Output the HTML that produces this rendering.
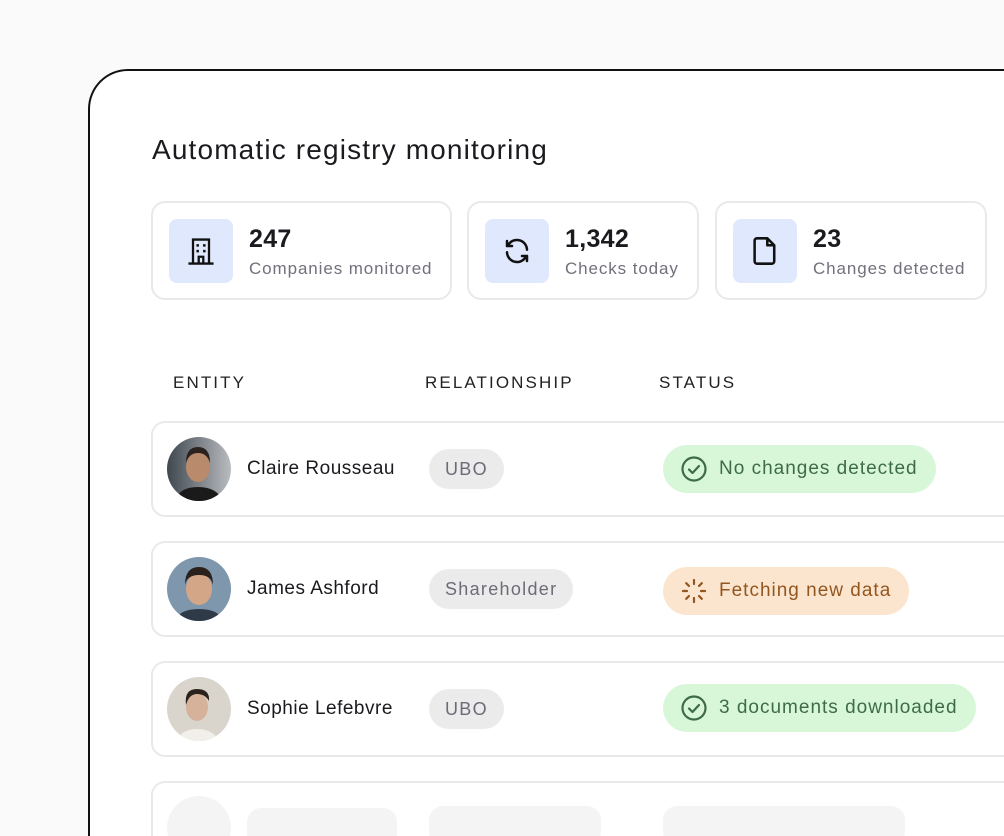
<!DOCTYPE html>
<html><head><meta charset="utf-8">
<style>
*{box-sizing:border-box;margin:0;padding:0}
html,body{width:1004px;height:836px;overflow:hidden}
body{background:#fafafa;font-family:"Liberation Sans",sans-serif;color:#1b1b1f}
#wrap{position:relative;width:1004px;height:836px;overflow:hidden}
.abs{position:absolute}
.panel{left:88px;top:69px;width:916px;height:767px;border:2px solid #111;border-right:0;border-bottom:0;border-radius:40px 0 0 0;background:#fff}
.title{left:152px;top:134px;font-size:28px;color:#1b1b1f;letter-spacing:1.15px}
.stat{top:201px;height:99px;border:2px solid #e9e9e9;border-radius:14px;background:#fff}
.ib{position:absolute;left:16px;top:16px;width:64px;height:64px;background:#dfe8fd;border-radius:8px;display:flex;align-items:center;justify-content:center}
.num{position:absolute;left:96px;top:22px;font-size:25px;font-weight:bold;color:#1b1b1f;letter-spacing:0.3px}
.lbl{position:absolute;left:96px;top:56px;font-size:17px;color:#70717b;white-space:nowrap;letter-spacing:0.9px}
.hd{top:373px;font-size:17px;letter-spacing:2.1px;color:#222}
.row{left:151px;width:853px;height:96px;border:2px solid #e9e9e9;border-right:0;border-radius:14px 0 0 14px;background:#fff}
.av{position:absolute;left:14px;top:14px;width:64px;height:64px;border-radius:50%;overflow:hidden}
.name{position:absolute;left:94px;top:35px;font-size:19px;color:#1b1b1f;white-space:nowrap;letter-spacing:0.5px}
.rel{position:absolute;left:276px;top:26px;height:40px;border-radius:20px;background:#ebebeb;color:#6b6c76;font-size:18px;line-height:40px;padding:0 16px;letter-spacing:1.3px}
.st{position:absolute;left:510px;top:22px;height:48px;border-radius:24px;font-size:19px;line-height:48px;padding:0 18px 0 56px;white-space:nowrap;letter-spacing:1px}
.st svg{position:absolute;left:18px;top:11px}
.g{background:#d8f7d9;color:#3e6b47}
.o{background:#fbe5cf;color:#93561f}
.sk{background:#f4f4f4;position:absolute}
</style></head><body><div id="wrap">
<div class="abs panel"></div>
<div class="abs title">Automatic registry monitoring</div>

<div class="abs stat" style="left:151px;width:301px">
 <div class="ib"><svg width="32" height="32" viewBox="0 0 28 28" fill="none" stroke="#111" stroke-width="2"><path d="M7 25V4h14v21M3 25h22M12 25v-6h4v6"/><g fill="#111" stroke="none"><rect x="10" y="8" width="2.2" height="2.2"/><rect x="15.8" y="8" width="2.2" height="2.2"/><rect x="10" y="13" width="2.2" height="2.2"/><rect x="15.8" y="13" width="2.2" height="2.2"/></g></svg></div>
 <div class="num">247</div><div class="lbl">Companies monitored</div>
</div>
<div class="abs stat" style="left:467px;width:232px">
 <div class="ib"><svg width="30" height="30" viewBox="0 0 24 24" fill="none" stroke="#111" stroke-width="2" stroke-linecap="round" stroke-linejoin="round"><path d="M20 11a8 8 0 0 0-14.5-4.5L4 8M4 4v4h4"/><path d="M4 13a8 8 0 0 0 14.5 4.5L20 16M20 20v-4h-4"/></svg></div>
 <div class="num">1,342</div><div class="lbl">Checks today</div>
</div>
<div class="abs stat" style="left:715px;width:272px">
 <div class="ib"><svg width="26" height="30" viewBox="0 0 22 26" fill="none" stroke="#111" stroke-width="2.2" stroke-linejoin="round"><path d="M4 2h9l6 6v14a2 2 0 0 1-2 2H4a2 2 0 0 1-2-2V4a2 2 0 0 1 2-2z"/><path d="M13 2v6h6"/></svg></div>
 <div class="num">23</div><div class="lbl">Changes detected</div>
</div>

<div class="abs hd" style="left:173px">ENTITY</div>
<div class="abs hd" style="left:425px">RELATIONSHIP</div>
<div class="abs hd" style="left:659px">STATUS</div>

<div class="abs row" style="top:421px">
 <div class="av"><svg width="64" height="64"><defs><linearGradient id="a1" x1="0" x2="1"><stop offset="0" stop-color="#3f4750"/><stop offset="1" stop-color="#b9bcbf"/></linearGradient></defs><rect width="64" height="64" fill="url(#a1)"/><ellipse cx="31" cy="30" rx="12" ry="15" fill="#b98a6c"/><path d="M19 26q0-16 12-16t12 16q-3-10-12-10t-12 10z" fill="#2a221e"/><path d="M8 64q4-14 23-14t25 14z" fill="#1a1a1a"/></svg></div>
 <div class="name">Claire Rousseau</div>
 <div class="rel">UBO</div>
 <div class="st g"><svg width="26" height="26" viewBox="0 0 26 26" fill="none" stroke="#3e6b47" stroke-width="2.2" stroke-linecap="round" stroke-linejoin="round"><circle cx="13" cy="13" r="11.5"/><path d="M8 13.5l3.5 3.5 6.5-7"/></svg>No changes detected</div>
</div>
<div class="abs row" style="top:541px">
 <div class="av"><svg width="64" height="64"><rect width="64" height="64" fill="#7f97ad"/><ellipse cx="32" cy="32" rx="13" ry="16" fill="#d2a687"/><path d="M18 28q0-18 14-18t14 18q-2-10-14-10t-14 10z" fill="#2b211c"/><path d="M8 64q4-12 24-12t24 12z" fill="#2e3a48"/></svg></div>
 <div class="name">James Ashford</div>
 <div class="rel">Shareholder</div>
 <div class="st o" style="top:24px;height:48px"><svg width="26" height="26" viewBox="0 0 26 26" fill="none" stroke="#93561f" stroke-width="2.2" stroke-linecap="round"><path d="M13 2v4M13 20v4M2 13h4M20 13h4M5.2 5.2l2.8 2.8M18 18l2.8 2.8M5.2 20.8L8 18M18 8l2.8-2.8"/></svg>Fetching new data</div>
</div>
<div class="abs row" style="top:661px">
 <div class="av"><svg width="64" height="64"><rect width="64" height="64" fill="#d9d5cc"/><ellipse cx="30" cy="30" rx="11" ry="14" fill="#d6b29a"/><path d="M19 28q-2-16 11-16t12 12q-4-7-12-7t-11 11z" fill="#2b221d"/><path d="M10 64q4-12 20-12t22 12z" fill="#f2efea"/></svg></div>
 <div class="name">Sophie Lefebvre</div>
 <div class="rel">UBO</div>
 <div class="st g" style="top:21px"><svg width="26" height="26" viewBox="0 0 26 26" fill="none" stroke="#3e6b47" stroke-width="2.2" stroke-linecap="round" stroke-linejoin="round"><circle cx="13" cy="13" r="11.5"/><path d="M8 13.5l3.5 3.5 6.5-7"/></svg>3 documents downloaded</div>
</div>
<div class="abs row" style="top:781px;height:55px;border-bottom:0;border-radius:14px 0 0 0;overflow:hidden">
 <div class="sk" style="left:14px;top:13px;width:64px;height:64px;border-radius:50%"></div>
 <div class="sk" style="left:94px;top:25px;width:150px;height:40px;border-radius:14px"></div>
 <div class="sk" style="left:276px;top:23px;width:172px;height:40px;border-radius:14px"></div>
 <div class="sk" style="left:510px;top:23px;width:242px;height:40px;border-radius:14px"></div>
</div>
</div></body></html>
